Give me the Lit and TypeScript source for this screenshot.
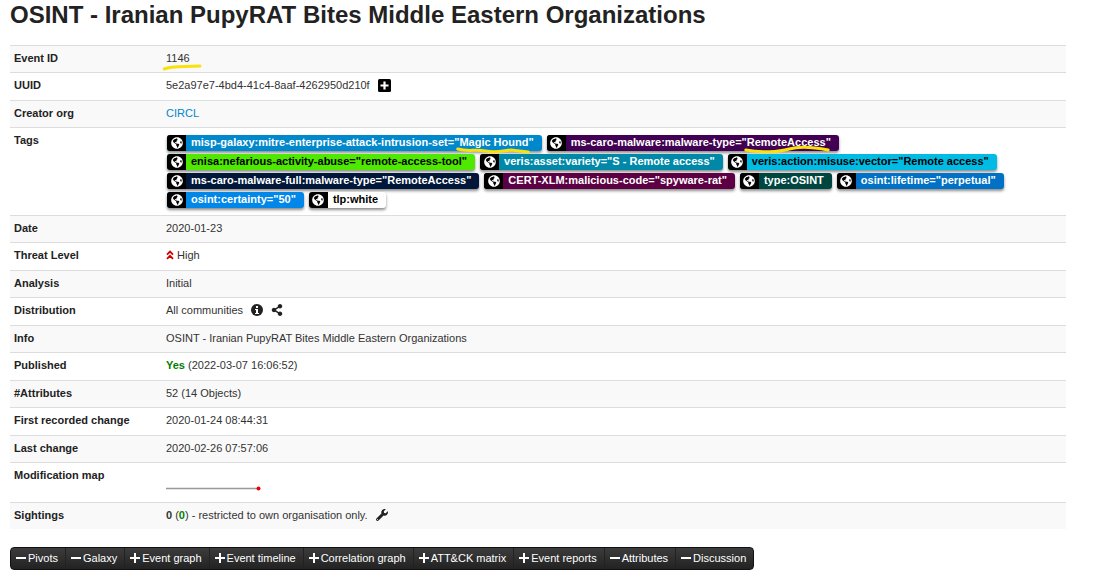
import { LitElement, html, css, svg, nothing } from "lit";
import { customElement, property } from "lit/decorators.js";

const paths = {
  globe:
    "M248 8C111.03 8 0 119.03 0 256s111.03 248 248 248 248-111.03 248-248S384.97 8 248 8zm82.29 357.6c-3.9 3.88-7.99 7.95-11.31 11.28-2.99 3-5.1 6.7-6.17 10.71-1.51 5.66-2.73 11.38-4.77 16.87l-17.39 46.85c-13.76 3-28 4.69-42.65 4.69v-27.38c1.69-12.62-7.64-36.26-22.63-51.25-6-6-9.37-14.14-9.37-22.63v-32.01c0-11.64-6.27-22.34-16.46-27.97-14.37-7.95-34.81-19.06-48.81-26.11-11.48-5.78-22.1-13.14-31.65-21.75l-.8-.72a114.792 114.792 0 0 1-18.06-20.74c-9.38-13.77-24.66-36.42-34.59-51.14 20.47-45.5 57.36-82.04 103.2-101.89l24.01 12.01C203.48 89.74 216 82.01 216 70.11v-11.3c7.99-1.29 16.12-2.11 24.39-2.42l28.3 28.3c6.25 6.25 6.25 16.38 0 22.63L264 112l-10.34 10.34c-3.12 3.12-3.12 8.19 0 11.31l4.69 4.69c3.12 3.12 3.12 8.19 0 11.31l-8 8a8.008 8.008 0 0 1-5.66 2.34h-8.99c-2.08 0-4.08.81-5.58 2.27l-9.92 9.65a8.008 8.008 0 0 0-1.58 9.31l15.59 31.19c2.66 5.32-1.21 11.58-7.15 11.58h-5.64c-1.93 0-3.79-.7-5.24-1.96l-9.28-8.06a16.017 16.017 0 0 0-15.55-3.1l-31.17 10.39a11.95 11.95 0 0 0-8.17 11.34c0 4.53 2.56 8.66 6.61 10.69l11.08 5.54c9.41 4.71 19.79 7.16 30.31 7.16s22.59 27.29 32 32h66.75c8.49 0 16.62 3.37 22.63 9.37l13.69 13.69a30.503 30.503 0 0 1 8.93 21.57 46.536 46.536 0 0 1-13.72 32.98zM417 274.25c-5.79-1.45-10.84-5-14.15-9.97l-17.98-26.97a23.97 23.97 0 0 1 0-26.62l19.59-29.38c2.32-3.47 5.5-6.29 9.24-8.15l12.98-6.49C440.2 193.59 448 223.87 448 256c0 8.67-.74 17.16-1.82 25.54L417 274.25z",
  share:
    "M352 320c-22.608 0-43.387 7.819-59.79 20.895l-102.486-64.054a96.551 96.551 0 0 0 0-41.683l102.486-64.054C308.613 184.181 329.392 192 352 192c53.019 0 96-42.981 96-96S405.019 0 352 0s-96 42.981-96 96c0 7.158.79 14.13 2.276 20.841L155.79 180.895C139.387 167.819 118.608 160 96 160c-53.019 0-96 42.981-96 96s42.981 96 96 96c22.608 0 43.387-7.819 59.79-20.895l102.486 64.054A96.301 96.301 0 0 0 256 416c0 53.019 42.981 96 96 96s96-42.981 96-96-42.981-96-96-96z",
  wrench:
    "M507.73 109.1c-2.24-9.03-13.54-12.09-20.12-5.51l-74.36 74.36-67.88-11.31-11.31-67.88 74.36-74.36c6.62-6.62 3.43-17.9-5.66-20.16-47.38-11.74-99.55.91-136.58 37.93-39.64 39.64-50.55 97.1-34.05 147.2L18.74 402.76c-24.99 24.99-24.99 65.51 0 90.5 24.99 24.99 65.51 24.99 90.5 0l213.21-213.21c50.12 16.71 107.47 5.68 147.37-34.22 37.07-37.07 49.7-89.32 37.91-136.73zM64 472c-13.25 0-24-10.75-24-24 0-13.26 10.75-24 24-24s24 10.74 24 24c0 13.25-10.75 24-24 24z",
};

const icons: Record<string, [string, unknown]> = {
  globe: ["0 0 496 512", svg`<path fill="currentColor" d=${paths.globe} />`],
  share: ["0 0 448 512", svg`<path fill="currentColor" d=${paths.share} />`],
  wrench: ["0 0 512 512", svg`<path fill="currentColor" d=${paths.wrench} />`],
  info: [
    "0 0 12 12",
    svg`<circle cx="6" cy="6" r="6" fill="currentColor" />
      <path fill="#fff" d="M5 2h2v2H5zM4 5h3v4h1v1H4V9h1V6H4z" />`,
  ],
  addBox: [
    "0 0 13 13",
    svg`<rect width="13" height="13" rx="1.5" fill="#000" />
      <path d="M6.5 2.5v8M2.5 6.5h8" stroke="#fff" stroke-width="2.2" />`,
  ],
  doubleUp: [
    "0 0 8 10",
    svg`<path d="M1 4.6 4 1.6l3 3M1 8.8l3-3 3 3" fill="none" stroke="currentColor" stroke-width="1.8" />`,
  ],
  plus: ["0 0 10 10", svg`<path d="M5 0v10M0 5h10" stroke="currentColor" stroke-width="2" />`],
  minus: ["0 0 10 10", svg`<path d="M0 5h10" stroke="currentColor" stroke-width="2" />`],
};

const icon = (name: string) => html`
  <svg class="icon ${name}" viewBox=${icons[name][0]} aria-hidden="true">${icons[name][1]}</svg>
`;

/** Text with a hand-drawn highlighter stroke below it. */
@customElement("marked-text")
class MarkedText extends LitElement {
  @property() path = "";
  static styles = css`
    :host {
      position: relative;
      display: inline-block;
    }
    .stroke {
      position: absolute;
      left: -2px;
      bottom: -5px;
      width: calc(100% + 6px);
      height: 8px;
      z-index: 1;
      overflow: visible;
    }
    .line {
      fill: none;
      stroke: #f9e10c;
      stroke-width: 3px;
      stroke-linecap: round;
      vector-effect: non-scaling-stroke;
    }
  `;
  render() {
    return html`<slot></slot
      ><svg class="stroke" viewBox="0 0 100 8" preserveAspectRatio="none" aria-hidden="true">
        <path class="line" d=${this.path} />
      </svg>`;
  }
}

interface Tag {
  name: string;
  marked?: string;
  bg: string;
  dark?: boolean;
}

const tagLines: Tag[][] = [
  [
    { name: "misp-galaxy:mitre-enterprise-attack-intrusion-set=", marked: "Magic Hound", bg: "#0088cc" },
    { name: "ms-caro-malware:malware-type=", marked: "RemoteAccess", bg: "#420053" },
  ],
  [
    { name: 'enisa:nefarious-activity-abuse="remote-access-tool"', bg: "#4ee800", dark: true },
    { name: 'veris:asset:variety="S - Remote access"', bg: "#0088a8" },
    { name: 'veris:action:misuse:vector="Remote access"', bg: "#00bce4", dark: true },
  ],
  [
    { name: 'ms-caro-malware-full:malware-type="RemoteAccess"', bg: "#001739" },
    { name: 'CERT-XLM:malicious-code="spyware-rat"', bg: "#5c0043" },
    { name: "type:OSINT", bg: "#004640" },
    { name: 'osint:lifetime="perpetual"', bg: "#0071c5" },
  ],
  [
    { name: 'osint:certainty="50"', bg: "#0087e8" },
    { name: "tlp:white", bg: "#ffffff", dark: true },
  ],
];

const sections: [string, boolean][] = [
  ["Pivots", true],
  ["Galaxy", true],
  ["Event graph", false],
  ["Event timeline", false],
  ["Correlation graph", false],
  ["ATT&CK matrix", false],
  ["Event reports", false],
  ["Attributes", true],
  ["Discussion", true],
];

@customElement("app-root")
class AppRoot extends LitElement {
  static styles = css`
    :host {
      display: block;
      padding: 0 34px 15px 10px;
      background: #fff;
      color: #333;
      font: 11px/18px "Liberation Sans", Arial, sans-serif;
    }
    h1 {
      margin: 0 0 15px;
      font-size: 24px;
      line-height: 30px;
      color: #222;
    }
    table {
      width: 100%;
      border-collapse: separate;
      border-spacing: 0;
    }
    th,
    td {
      height: 18px;
      padding: 3px 5px 5px;
      border-top: 1px solid #ddd;
      text-align: left;
      vertical-align: top;
    }
    th {
      width: 142px;
      padding-left: 4px;
      color: #222;
    }
    tr:nth-child(even) > * {
      padding-bottom: 6px;
    }
    tr:nth-child(odd) > * {
      background: #f9f9f9;
    }
    a {
      color: #0088cc;
      text-decoration: none;
    }
    .tags {
      display: flex;
      flex-direction: column;
      gap: 3px;
      padding: 4px 1px 1px 1px;
    }
    .line {
      display: flex;
      flex-wrap: wrap;
      gap: 5px;
    }
    .tag {
      display: flex;
      height: 16px;
      border-radius: 3px;
      box-shadow: 0 2px 3px rgba(0, 0, 0, 0.45);
      color: #fff;
      font-weight: bold;
      line-height: 14px;
      white-space: nowrap;
    }
    .tag.dark {
      color: #000;
    }
    .scope {
      display: flex;
      align-items: center;
      justify-content: center;
      width: 19px;
      border-radius: 3px 0 0 3px;
      background: #000;
      color: #fff;
    }
    .label {
      padding: 0 8px 0 5px;
    }
    .icon {
      display: block;
      width: 12px;
      height: 12px;
      flex: none;
    }
    .icon.addBox {
      width: 13px;
      height: 13px;
    }
    .icon.doubleUp {
      width: 8px;
      height: 10px;
      color: #c00;
    }
    .icon.plus,
    .icon.minus {
      width: 10px;
      height: 10px;
    }
    .value {
      display: flex;
      align-items: center;
      gap: 8px;
    }
    .value.tight {
      gap: 3px;
    }
    .action {
      padding: 0;
      border: 0;
      background: none;
      color: #222;
      cursor: pointer;
    }
    .good {
      color: #008000;
    }
    .map {
      display: block;
      width: 96px;
      height: 30px;
    }
    .bar {
      display: inline-flex;
      flex-wrap: wrap;
      margin-top: 18px;
      overflow: hidden;
      border-radius: 4px;
      border: 1px solid #111;
      background: linear-gradient(#3c3c3c, #222);
    }
    .toggle {
      display: flex;
      align-items: center;
      gap: 2px;
      height: 21px;
      padding: 0 7px 1px 5px;
      border: 0;
      border-right: 1px solid #222;
      background: none;
      color: #fff;
      font: inherit;
      white-space: nowrap;
      cursor: pointer;
    }
    .toggle:last-child {
      border-right: 0;
    }
  `;

  private tag(t: Tag) {
    const path = t.marked === "Magic Hound" ? "M1 3C15 6 25 3 38 5S60 5 72 4L95 6" : "M1 4C18 7 40 6 52 3S80 1 98 4";
    return html`<span class="tag ${t.dark ? "dark" : ""}" style="background:${t.bg}"
      ><span class="scope">${icon("globe")}</span
      ><span class="label"
        >${t.name}${t.marked ? html`"<marked-text path=${path}>${t.marked}</marked-text>"` : nothing}</span
      ></span
    >`;
  }

  private row(label: string, value: unknown) {
    return html`<tr>
      <th scope="row">${label}</th>
      <td>${value}</td>
    </tr>`;
  }

  render() {
    return html`
      <h1>OSINT - Iranian PupyRAT Bites Middle Eastern Organizations</h1>
      <table>
        <tbody>
          ${this.row("Event ID", html`<marked-text path="M1 5C25 2 60 3 121 2">1146</marked-text>`)}
          ${this.row(
            "UUID",
            html`<div class="value">
              5e2a97e7-4bd4-41c4-8aaf-4262950d210f
              <button class="action" aria-label="Extend event">${icon("addBox")}</button>
            </div>`
          )}
          ${this.row("Creator org", html`<a href="#circl">CIRCL</a>`)}
          ${this.row(
            "Tags",
            html`<div class="tags">
              ${tagLines.map((l) => html`<div class="line">${l.map((t) => this.tag(t))}</div>`)}
            </div>`
          )}
          ${this.row("Date", "2020-01-23")}
          ${this.row("Threat Level", html`<div class="value tight">${icon("doubleUp")}High</div>`)}
          ${this.row("Analysis", "Initial")}
          ${this.row(
            "Distribution",
            html`<div class="value">
              All communities
              <button class="action" aria-label="Distribution details">${icon("info")}</button>
              <button class="action" aria-label="Distribution graph">${icon("share")}</button>
            </div>`
          )}
          ${this.row("Info", "OSINT - Iranian PupyRAT Bites Middle Eastern Organizations")}
          ${this.row("Published", html`<b class="good">Yes</b> (2022-03-07 16:06:52)`)}
          ${this.row("#Attributes", "52 (14 Objects)")}
          ${this.row("First recorded change", "2020-01-24 08:44:31")}
          ${this.row("Last change", "2020-02-26 07:57:06")}
          ${this.row(
            "Modification map",
            html`<svg class="map" viewBox="0 0 96 30" role="img" aria-label="Modifications over time">
              <path d="M0 22.5h92" stroke="#999" stroke-width="1.5" />
              <circle cx="92.5" cy="22.5" r="2" fill="#e8000b" />
            </svg>`
          )}
          ${this.row(
            "Sightings",
            html`<div class="value">
              <span><b>0</b> (<b class="good">0</b>) - restricted to own organisation only.</span>
              <button class="action" aria-label="Advanced sightings">${icon("wrench")}</button>
            </div>`
          )}
        </tbody>
      </table>
      <div class="bar">
        ${sections.map(
          ([name, open]) => html`<button class="toggle" aria-expanded=${open ? "true" : "false"}>
            ${icon(open ? "minus" : "plus")}${name}
          </button>`
        )}
      </div>
    `;
  }
}
